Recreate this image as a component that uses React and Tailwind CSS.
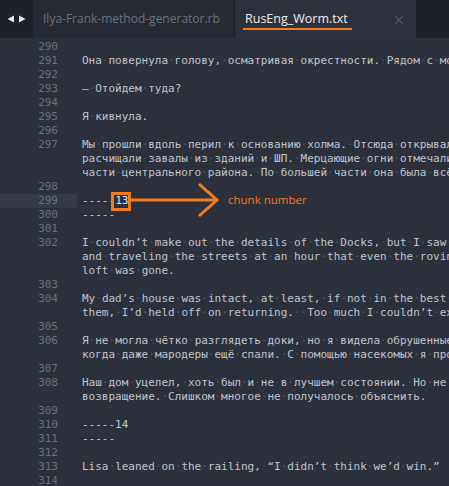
import React from 'react'

const rows = [
  { n: 290, t: '' },
  { n: 291, t: 'Она повернула голову, осматривая окрестности. Рядом с морем' },
  { n: 292, t: '' },
  { n: 293, t: '— Отойдем туда?' },
  { n: 294, t: '' },
  { n: 295, t: 'Я кивнула.' },
  { n: 296, t: '' },
  { n: 297, t: 'Мы прошли вдоль перил к основанию холма. Отсюда открывался вид' },
  { n: null, t: 'расчищали завалы из зданий и ШП. Мерцающие огни отмечали места' },
  { n: null, t: 'части центрального района. По большей части она была всё ещё' },
  { n: 298, t: '' },
  { n: 299, t: '-----', chunk: '13' },
  { n: 300, t: '-----' },
  { n: 301, t: '' },
  { n: 302, t: 'I couldn’t make out the details of the Docks, but I saw the' },
  { n: null, t: 'and traveling the streets at an hour that even the roving' },
  { n: null, t: 'loft was gone.' },
  { n: 303, t: '' },
  { n: 304, t: 'My dad’s house was intact, at least, if not in the best shape' },
  { n: null, t: 'them, I’d held off on returning.  Too much I couldn’t explain' },
  { n: 305, t: '' },
  { n: 306, t: 'Я не могла чётко разглядеть доки, но я видела обрушенные дома' },
  { n: null, t: 'когда даже мародеры ещё спали. С помощью насекомых я проверила' },
  { n: 307, t: '' },
  { n: 308, t: 'Наш дом уцелел, хоть был и не в лучшем состоянии. Но не' },
  { n: null, t: 'возвращение. Слишком многое не получалось объяснить.' },
  { n: 309, t: '' },
  { n: 310, t: '-----14' },
  { n: 311, t: '-----' },
  { n: 312, t: '' },
  { n: 313, t: 'Lisa leaned on the railing, “I didn’t think we’d win.”' },
  { n: 314, t: '' },
]

// sublime-style visible whitespace
function Visible({ text }) {
  return text.split(' ').map((part, i) => (
    <React.Fragment key={i}>
      {i > 0 && <span className="text-[#525c68]">·</span>}
      {part}
    </React.Fragment>
  ))
}

export default function App() {
  return (
    <div className="w-[449px] h-[486px] overflow-hidden bg-[#2b303b] flex flex-col">
      {/* Tab bar */}
      <div className="h-[38px] flex shrink-0 bg-[#1e2128] font-['Open_Sans',sans-serif] text-[12px] whitespace-nowrap">
        <div className="w-[33px] flex items-center justify-center gap-[3px] pb-[1px]">
          <svg width="8" height="8" viewBox="0 0 8 8">
            <path d="M7 0.5 L0.5 4 L7 7.5 Z" fill="#e8e8e8" />
          </svg>
          <svg width="8" height="8" viewBox="0 0 8 8">
            <path d="M1 0.5 L7.5 4 L1 7.5 Z" fill="#e8e8e8" />
          </svg>
        </div>
        <div className="w-[202px] bg-[#262a33] flex items-center pl-[10px] text-[#6b7380] border-r border-[#1e2128] overflow-hidden">
          Ilya-Frank-method-generator.rb
        </div>
        <div className="w-[181px] bg-[#2c313b] flex items-center pl-[10px] pr-[12px] justify-between">
          <span className="relative text-[#eef0f3] text-[12.5px]">
            RusEng_Worm.txt
            <span className="absolute left-[-2px] right-[-4px] bottom-[-2px] h-[2px] bg-[#f47b20]" />
          </span>
          <svg width="10" height="10" viewBox="0 0 10 10" className="mt-[2px]">
            <path d="M1 1 L9 9 M9 1 L1 9" stroke="#4e5562" strokeWidth="1.2" />
          </svg>
        </div>
      </div>

      {/* Editor */}
      <div className="flex-1 pt-[2px] font-['DejaVu_Sans_Mono',monospace] text-[11px] leading-[14px]">
        {rows.map((r, i) => (
          <div key={i} className="flex h-[14px]">
            <div
              className={`w-[77px] shrink-0 text-right pr-[19px] text-[#65737e] ${
                r.n === 299 ? 'bg-[#343a46]' : ''
              }`}
            >
              {r.n ?? ''}
            </div>
            <div className="pl-[5px] whitespace-pre text-[#c0c5ce] relative">
              <Visible text={r.t} />
              {r.chunk && (
                <>
                  <span className="relative text-[#dfe3ea]">
                    {r.chunk}
                    <span className="absolute left-[-4px] right-[-3px] top-[-2px] bottom-[-4px] border-[3px] border-[#f47b20]" />
                  </span>
                  <svg
                    width="90"
                    height="36"
                    viewBox="0 0 90 36"
                    className="absolute left-[54px] top-[-11px]"
                  >
                    <path d="M0 17 L86 17" stroke="#f47b20" strokeWidth="3" />
                    <path d="M68 1 L86 17 L68 33" stroke="#f47b20" strokeWidth="3" fill="none" />
                  </svg>
                  <span className="absolute left-[151px] top-[-1px] font-['Open_Sans',sans-serif] text-[11.5px] text-[#ef7a2c]">
                    chunk number
                  </span>
                </>
              )}
            </div>
          </div>
        ))}
      </div>
    </div>
  )
}
